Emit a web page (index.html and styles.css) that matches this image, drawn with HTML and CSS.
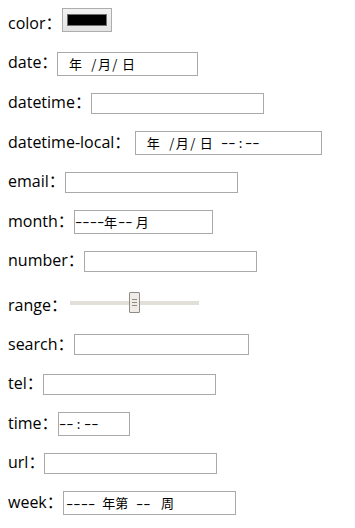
FILE: index.html
```html
<!DOCTYPE html>
<html lang="zh-CN">
<head>
    <meta charset="UTF-8">
    <meta name="viewport" content="width=device-width, initial-scale=1.0">
    <title>input types</title>
    <link rel="stylesheet" href="styles.css">
</head>
<body>
    <form class="types">
        <div class="row row-color">
            <label>color：</label>
            <span class="color-btn"><span class="swatch"></span></span>
        </div>

        <div class="row">
            <label>date：</label>
            <span class="box box-date">
                <span class="cjk ml-yr">年</span><span class="slash ml8">/</span><span class="cjk">月</span><span class="slash">/</span><span class="cjk ml3">日</span>
            </span>
        </div>

        <div class="row">
            <label for="f-datetime">datetime：</label>
            <input class="field" id="f-datetime" type="text">
        </div>

        <div class="row">
            <label class="label-wide">datetime-local：</label>
            <span class="box box-dtl">
                <span class="cjk ml-yr">年</span><span class="slash ml8">/</span><span class="cjk">月</span><span class="slash">/</span><span class="cjk ml3">日</span><span class="dash d2 ml-time"><span>--</span></span><span class="colon colon-dtl">:</span><span class="dash d2"><span>--</span></span>
            </span>
        </div>

        <div class="row">
            <label for="f-email">email：</label>
            <input class="field" id="f-email" type="email">
        </div>

        <div class="row">
            <label>month：</label>
            <span class="box box-month">
                <span class="dash d4"><span>----</span></span><span class="cjk">年</span><span class="dash d2 ml1"><span>--</span></span><span class="cjk ml3">月</span>
            </span>
        </div>

        <div class="row">
            <label for="f-number">number：</label>
            <input class="field" id="f-number" type="number">
        </div>

        <div class="row row-range">
            <label>range：</label>
            <span class="range">
                <span class="track"></span>
                <span class="thumb"><i></i><i></i><i></i></span>
                <span class="track"></span>
            </span>
        </div>

        <div class="row">
            <label for="f-search">search：</label>
            <input class="field field-search" id="f-search" type="search">
        </div>

        <div class="row">
            <label for="f-tel">tel：</label>
            <input class="field" id="f-tel" type="tel">
        </div>

        <div class="row">
            <label>time：</label>
            <span class="box box-time">
                <span class="dash d2"><span>--</span></span><span class="colon colon-time">:</span><span class="dash d2"><span>--</span></span>
            </span>
        </div>

        <div class="row">
            <label for="f-url">url：</label>
            <input class="field" id="f-url" type="url">
        </div>

        <div class="row">
            <label>week：</label>
            <span class="box box-week">
                <span class="dash d4"><span>----</span></span><span class="cjk ml7">年</span><span class="cjk">第</span><span class="dash d2 ml7"><span>--</span></span><span class="cjk ml11">周</span>
            </span>
        </div>
    </form>
</body>
</html>
```

FILE: styles.css
```css
body {
    margin: 0;
    background-color: #fff;
    color: #000;
}
.types {
    padding: 12px 8px 0;
    font-family: "Open Sans", "Noto Sans CJK SC", sans-serif;
    font-size: 16px;
}
.row {
    display: flex;
    align-items: center;
    height: 24px;
    margin-bottom: 15.6px;
}
.row label {
    line-height: 22px;
    margin-bottom: 2.4px;
    white-space: nowrap;
}
.row .label-wide {
    margin-right: 5px;
}

/* text-like inputs */
.field {
    box-sizing: border-box;
    width: 173px;
    height: 21px;
    margin: 0;
    padding: 0 2px;
    border: 1px solid #a9a9a9;
    border-radius: 0;
    background: #fff;
    font: 13px "Noto Sans CJK SC", sans-serif;
    outline: none;
    -webkit-appearance: none;
    appearance: none;
}
.field-search {
    width: 175px;
}
.field::-webkit-inner-spin-button,
.field::-webkit-outer-spin-button,
.field::-webkit-search-cancel-button {
    -webkit-appearance: none;
    display: none;
}

/* date/time like boxes */
.box {
    box-sizing: border-box;
    display: flex;
    align-items: center;
    height: 24px;
    border: 1px solid #a9a9a9;
    background: #fff;
    font-size: 13px;
    white-space: pre;
    padding-bottom: 1px;
}
.box-date { width: 141px; }
.box-dtl { width: 187px; }
.box-month { width: 139px; }
.box-time { width: 72px; }
.box-week { width: 173px; padding-left: 1.8px; }

.cjk {
    font-family: "Noto Sans CJK SC", sans-serif;
    width: 13px;
}
.slash {
    font-family: "Noto Sans CJK SC", sans-serif;
    display: inline-block;
    width: 8px;
    text-align: center;
}
/* the dashes of an empty field: long, nearly touching */
.dash {
    display: inline-block;
    overflow: visible;
    font-family: "Liberation Sans", sans-serif;
    font-size: 13px;
    line-height: 15px;
}
.dash span {
    display: inline-block;
    transform: scaleX(1.69);
    transform-origin: left center;
    margin-top: 1px;
}
.d2 { width: 14.6px; }
.d4 { width: 29.3px; }
.colon {
    font-family: "Noto Sans CJK SC", sans-serif;
    text-align: center;
}
.colon-dtl { width: 9px; }
.colon-time { width: 11px; }

.ml-yr { margin-left: 10.5px; }
.ml-time { margin-left: 8.6px; }
.ml1 { margin-left: 1px; }
.ml3 { margin-left: 3px; }
.ml7 { margin-left: 7.4px; }
.ml8 { margin-left: 8px; }
.ml11 { margin-left: 10.8px; }

/* color button */
.row-color .color-btn {
    margin-bottom: 9px;
}
.color-btn {
    box-sizing: border-box;
    display: flex;
    align-items: center;
    justify-content: center;
    width: 50px;
    height: 24px;
    border: 1px solid #adadad;
    background: linear-gradient(#f2f2f2, #e3e3e3);
}
.swatch {
    box-sizing: border-box;
    width: 40px;
    height: 12px;
    border: 1px solid #707070;
    background: #000;
}

/* range */
.row-range {
    height: 28px;
    align-items: flex-start;
}
.row-range label {
    margin-top: 5px;
    margin-bottom: 0;
}
.range {
    display: flex;
    align-items: center;
    width: 129px;
    height: 21px;
    margin-top: 3px;
    margin-left: 3px;
}
.track {
    width: 59px;
    height: 4px;
    background: #e2ded8;
}
.thumb {
    box-sizing: border-box;
    display: flex;
    flex-direction: column;
    align-items: center;
    justify-content: center;
    gap: 2px;
    width: 11px;
    height: 21px;
    border: 1px solid #8f8b85;
    border-radius: 1px;
    background: #efece8;
}
.thumb i {
    display: block;
    width: 5px;
    height: 1px;
    background: #8f8b85;
}
```
